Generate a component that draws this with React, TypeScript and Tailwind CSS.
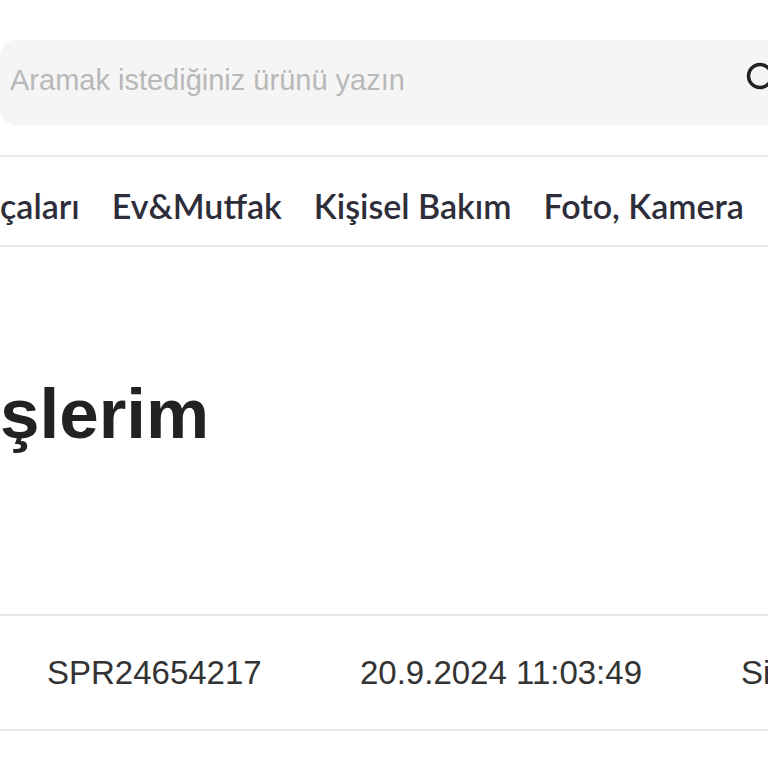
import React from "react";

export default function App() {
  return (
    <div className="w-[768px] h-[768px] overflow-hidden bg-white relative">
      <div className="pt-[40px]">
        <div className="w-[840px] h-[85px] rounded-[16px] bg-[#f5f5f5] flex items-center pl-[10px]">
          <span
            className="flex-1 text-[29px] text-[#b8b8b8] whitespace-nowrap -mt-[4px]"
            style={{ fontFamily: '"Liberation Sans", Arial, sans-serif' }}
          >
            Aramak istediğiniz ürünü yazın
          </span>
          <svg
            className="mr-[54px] shrink-0 -mt-[6px]"
            width="40"
            height="40"
            viewBox="0 0 40 40"
            fill="none"
            stroke="#222"
            strokeWidth="3.5"
            strokeLinecap="round"
          >
            <circle cx="14" cy="16" r="11.5" />
            <path d="M23 25 L33 35" />
          </svg>
        </div>
      </div>

      <nav
        className="mt-[30px] h-[92px] border-y-2 border-[#e9e9e9] flex items-center gap-[32px] pt-[8px] whitespace-nowrap text-[34px] font-semibold text-[#2e2e3a]"
        style={{ fontFamily: 'Lato, "Noto Sans", sans-serif' }}
      >
        <span>çaları</span>
        <span>Ev&amp;Mutfak</span>
        <span>Kişisel Bakım</span>
        <span>Foto, Kamera</span>
      </nav>

      <h1
        className="mt-[131px] h-[74px] text-[71px] leading-none font-bold text-[#222222]"
        style={{ fontFamily: '"Liberation Sans", Arial, sans-serif' }}
      >
        şlerim
      </h1>

      <div
        className="mt-[162px] h-[117px] border-y-2 border-[#e6e6e6] flex items-center pl-[47px] whitespace-nowrap text-[33px] text-[#333333]"
        style={{ fontFamily: '"Liberation Sans", Arial, sans-serif' }}
      >
        <span className="w-[313px] shrink-0">SPR24654217</span>
        <span className="w-[381px] shrink-0">20.9.2024 11:03:49</span>
        <span className="shrink-0">Sipariş Alındı</span>
      </div>
    </div>
  );
}
